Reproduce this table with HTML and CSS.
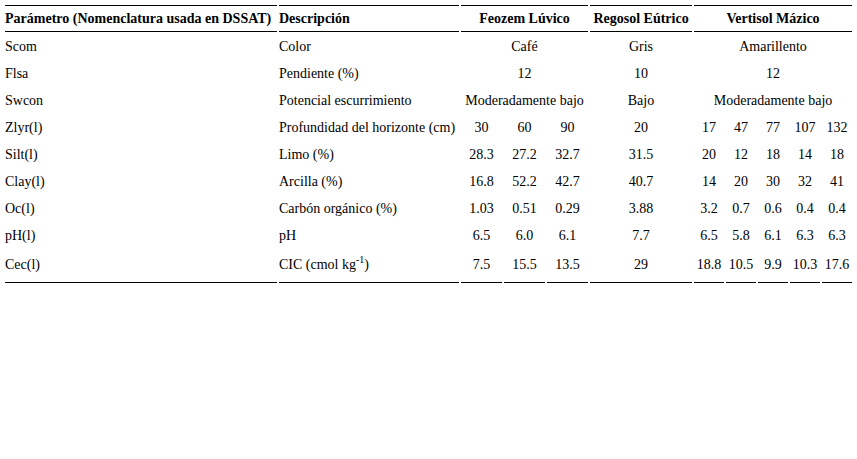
FILE: index.html
```html
<!DOCTYPE html>
<html lang="es">
<head>
<meta charset="utf-8">
<title>Parámetros de suelo</title>
<link rel="stylesheet" href="styles.css">
</head>
<body>
<table class="soil">
  <colgroup>
    <col class="c-param">
    <col class="c-desc">
    <col class="c-f"><col class="c-f"><col class="c-f">
    <col class="c-r">
    <col class="c-v"><col class="c-v"><col class="c-v"><col class="c-v"><col class="c-v">
  </colgroup>
  <thead>
    <tr>
      <th class="left">Parámetro (Nomenclatura usada en DSSAT)</th>
      <th class="left">Descripción</th>
      <th colspan="3">Feozem Lúvico</th>
      <th>Regosol Eútrico</th>
      <th colspan="5">Vertisol Mázico</th>
    </tr>
  </thead>
  <tbody>
    <tr>
      <td class="left">Scom</td><td class="left">Color</td>
      <td colspan="3">Café</td><td>Gris</td><td colspan="5">Amarillento</td>
    </tr>
    <tr>
      <td class="left">Flsa</td><td class="left">Pendiente (%)</td>
      <td colspan="3">12</td><td>10</td><td colspan="5">12</td>
    </tr>
    <tr>
      <td class="left">Swcon</td><td class="left">Potencial escurrimiento</td>
      <td colspan="3">Moderadamente bajo</td><td>Bajo</td><td colspan="5">Moderadamente bajo</td>
    </tr>
    <tr>
      <td class="left">Zlyr(l)</td><td class="left">Profundidad del horizonte (cm)</td>
      <td>30</td><td>60</td><td>90</td><td>20</td>
      <td>17</td><td>47</td><td>77</td><td>107</td><td>132</td>
    </tr>
    <tr>
      <td class="left">Silt(l)</td><td class="left">Limo (%)</td>
      <td>28.3</td><td>27.2</td><td>32.7</td><td>31.5</td>
      <td>20</td><td>12</td><td>18</td><td>14</td><td>18</td>
    </tr>
    <tr>
      <td class="left">Clay(l)</td><td class="left">Arcilla (%)</td>
      <td>16.8</td><td>52.2</td><td>42.7</td><td>40.7</td>
      <td>14</td><td>20</td><td>30</td><td>32</td><td>41</td>
    </tr>
    <tr>
      <td class="left">Oc(l)</td><td class="left">Carbón orgánico (%)</td>
      <td>1.03</td><td>0.51</td><td>0.29</td><td>3.88</td>
      <td>3.2</td><td>0.7</td><td>0.6</td><td>0.4</td><td>0.4</td>
    </tr>
    <tr>
      <td class="left">pH(l)</td><td class="left">pH</td>
      <td>6.5</td><td>6.0</td><td>6.1</td><td>7.7</td>
      <td>6.5</td><td>5.8</td><td>6.1</td><td>6.3</td><td>6.3</td>
    </tr>
    <tr class="last">
      <td class="left">Cec(l)</td><td class="left">CIC (cmol kg<sup>-1</sup>)</td>
      <td>7.5</td><td>15.5</td><td>13.5</td><td>29</td>
      <td>18.8</td><td>10.5</td><td>9.9</td><td>10.3</td><td>17.6</td>
    </tr>
  </tbody>
</table>
</body>
</html>
```

FILE: styles.css
```css
html, body {
  background: #fff;
}

body {
  margin: 3px;
  font-family: "Liberation Serif", "Times New Roman", serif;
  font-size: 14px;
  color: #000;
}

.soil {
  width: 851px;
  table-layout: fixed;
  border-collapse: separate;
  border-spacing: 2px;
}

.c-param { width: 272px; }
.c-desc { width: 180px; }
.c-f { width: 41px; }
.c-r { width: 102px; }
.c-v { width: 30px; }

.soil th,
.soil td {
  padding: 0;
  text-align: center;
  vertical-align: middle;
  white-space: nowrap;
  line-height: 16px;
}

.soil th {
  font-weight: bold;
  height: 25px;
  border-top: 1px solid #000;
  border-bottom: 1px solid #000;
}

.soil td {
  height: 25px;
}

.soil .left {
  text-align: left;
}

.soil .last td {
  height: 30px;
  padding-bottom: 2px;
  border-bottom: 1px solid #000;
}

.soil sup {
  font-size: 10px;
  line-height: 0;
  vertical-align: 6px;
}
```
